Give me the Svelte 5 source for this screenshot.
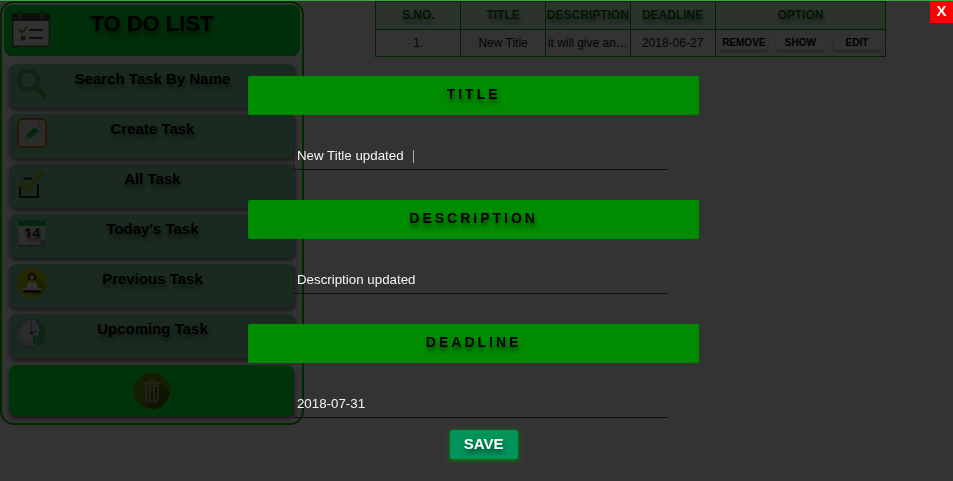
<script>
  const menu = [
    { icon: 'search', label: 'Search Task By Name' },
    { icon: 'create', label: 'Create Task' },
    { icon: 'all', label: 'All Task' },
    { icon: 'today', label: "Today's Task" },
    { icon: 'previous', label: 'Previous Task' },
    { icon: 'upcoming', label: 'Upcoming Task' }
  ];
  const columns = ['S.NO.', 'TITLE', 'DESCRIPTION', 'DEADLINE', 'OPTION'];
  const tasks = [
    { title: 'New Title', description: 'it will give an…', deadline: '2018-06-27' }
  ];
  const ticks = Array.from({ length: 12 }, (_, i) => i * 30);

  let title = $state('New Title updated');
  let description = $state('Description updated');
  let deadline = $state('2018-07-31');
</script>

<div class="page">
  <aside>
    <header>
      <svg class="logo" viewBox="0 0 38 36" aria-hidden="true">
        <rect x="0.700" y="2.700" width="36.600" height="32.600" rx="1" fill="#f4f4f4" stroke="#555" stroke-width="1.400" />
        <path d="M0 3h38v7H0z" fill="#404040" />
        <rect x="5" y="0" width="4.500" height="8.500" rx="2" fill="#3f8c1c" />
        <rect x="28" y="0" width="4.500" height="8.500" rx="2" fill="#3f8c1c" />
        <path d="M7 18l3 3.500 5.500-6" fill="none" stroke="#3f8c1c" stroke-width="1.800" />
        <circle cx="11" cy="27" r="2.600" fill="#3f8c1c" />
        <path d="M18 19h12M18 27h12" stroke="#404040" stroke-width="2" stroke-linecap="round" />
      </svg>
      <h1>TO DO LIST</h1>
    </header>

    <nav>
      {#each menu as item}
        <button class="item" type="button">
          <svg viewBox="0 0 30 30" aria-hidden="true">
            {#if item.icon === 'search'}
              <circle cx="11.500" cy="12" r="9.500" fill="none" stroke="#3cb450" stroke-width="4" />
              <path d="M18.500 19l9 8.500" stroke="#3cb450" stroke-width="4.500" stroke-linecap="round" />
            {:else if item.icon === 'create'}
              <rect x="1" y="1" width="28" height="28" rx="5" fill="#ddd" stroke="#d86b14" stroke-width="2" />
              <path d="M7.500 22.500l2-6 4 4z" fill="#d99a55" />
              <path d="M9.500 16.500l8.500-7.500 4.500 4-9 7.500z" fill="#12c35c" />
              <path d="M18 9l2-1.800 4 4.200-1.500 1.600z" fill="#eee" />
              <path d="M20 7.200q2-1.500 3.500 0t.5 4.200z" fill="#e58a8a" />
            {:else if item.icon === 'all'}
              <path d="M6.500 10.500h8.500M3 18v10q0 1.300 1.300 1.300h15.400q1.300 0 1.300-1.300V16" fill="none" stroke="#222" stroke-width="2" />
              <path d="M3 15l7 7L27 3.500" fill="none" stroke="#a3b43c" stroke-width="5.500" />
            {:else if item.icon === 'today'}
              <path d="M2 3h26v25H2z" fill="#e8e8e8" />
              <path d="M1.500 27h26.500v1.500H1.500z" fill="#777" />
              <path d="M1.500 2h27v6h-27z" fill="#18b84a" />
              <path d="M6 1v3M24 1v3" stroke="#ccc" stroke-width="1.500" />
              <text x="15" y="20" text-anchor="middle" font-size="15" font-weight="bold" font-family="Open Sans, sans-serif" fill="#333">14</text>
              <path d="M22 28q1-5 6-7v7z" fill="#999" />
            {:else if item.icon === 'previous'}
              <circle cx="15" cy="15" r="15" fill="#b4c400" />
              <path d="M18 7l11 10q-2 9-10 12l-11-6z" fill="#98a600" />
              <path d="M11 12V9q0-4 4-4t4 4v3z" fill="#333" />
              <circle cx="15" cy="9.500" r="2.400" fill="#edc3a0" />
              <path d="M9 21q0-8 6-8t6 8z" fill="#e8b8a0" />
              <path d="M10.500 15h9v5.500h-9z" fill="#fff" />
              <circle cx="15" cy="17.500" r="1" fill="#579bd2" />
              <path d="M5.500 20.500h19v1.500h-19z" fill="#fff" />
              <path d="M6.500 22h17v3h-17z" fill="#333" />
            {:else}
              <circle cx="14.500" cy="15" r="14" fill="#cbd4e6" stroke="#999fae" stroke-width="1.500" />
              {#each ticks as angle}
                <circle cx="14.500" cy="4" r="0.700" fill="#444" transform="rotate({angle} 14.500 15)" />
              {/each}
              <path d="M19 1.500q12 6 9 18l-2 4 2 3H16V16l4 3.500q5-6-1-18z" fill="#40b968" />
              <path d="M14.500 4v11" stroke="#d0803a" stroke-width="1.300" />
              <path d="M14.500 15l5-1.500" stroke="#c85a40" stroke-width="1" />
              <circle cx="14.500" cy="15" r="1.500" fill="#333" />
            {/if}
          </svg>
          <span>{item.label}</span>
        </button>
      {/each}
      <button class="trash" type="button" aria-label="Delete all tasks">
        <svg viewBox="0 0 36 36" aria-hidden="true">
          <circle cx="18" cy="18" r="18" fill="#6f8c00" />
          <path d="M26 10l9.500 9q-1 12-12 16.500q-5 1-8-.5L11 29z" fill="#4c6600" />
          <path d="M15 8h6M10 10h16" fill="none" stroke="#b4bb9c" stroke-width="1.600" />
          <path d="M11.800 12.500h12.400l-.7 16h-11zM16 13v15M20 13v15" fill="none" stroke="#b4bb9c" stroke-width="1.600" />
        </svg>
      </button>
    </nav>
  </aside>

  <main>
    <table>
      <thead>
        <tr>
          {#each columns as column}
            <th class:wide={column === 'OPTION'}>{column}</th>
          {/each}
        </tr>
      </thead>
      <tbody>
        {#each tasks as task, i}
          <tr>
            <td>{i + 1}.</td>
            <td>{task.title}</td>
            <td>{task.description}</td>
            <td>{task.deadline}</td>
            <td>
              <div class="options">
                <button type="button">REMOVE</button>
                <button type="button">SHOW</button>
                <button type="button">EDIT</button>
              </div>
            </td>
          </tr>
        {/each}
      </tbody>
    </table>
  </main>
</div>

<div class="overlay" role="dialog" aria-label="Edit task">
  <button class="close" type="button" aria-label="Close">X</button>
  <form>
    <label for="title">TITLE</label>
    <div class="field">
      <input id="title" type="text" bind:value={title} />
      <i class="caret"></i>
    </div>
    <label for="description">DESCRIPTION</label>
    <div class="field">
      <input id="description" type="text" bind:value={description} />
    </div>
    <label for="deadline">DEADLINE</label>
    <div class="field">
      <input id="deadline" type="text" bind:value={deadline} />
    </div>
    <button class="save" type="button">SAVE</button>
  </form>
</div>

<style>
  :global(body) {
    margin: 0;
    background: #fff;
    font-family: "Liberation Sans", Arial, sans-serif;
  }

  * {
    box-sizing: border-box;
  }

  button,
  input {
    font-family: inherit;
  }

  button {
    border: 0;
    padding: 0;
    cursor: pointer;
  }

  .page {
    display: flex;
    align-items: flex-start;
    padding-top: 1px;
  }

  aside {
    width: 31.9%;
    padding: 2px 2px 7px;
    border: 2px solid #00c000;
    border-radius: 14px;
  }

  header {
    display: grid;
    grid-template-columns: 38px 1fr 38px;
    height: 51px;
    padding: 6px 8px;
    border-radius: 8px;
    background: #00e132;
  }

  .logo {
    width: 38px;
    height: 36px;
  }

  h1 {
    margin: 0;
    font-size: 22px;
    line-height: 26px;
    text-align: center;
    text-shadow: 1px 4px 4px rgba(0, 0, 0, 0.5);
  }

  nav {
    display: flex;
    flex-direction: column;
    gap: 6px;
    padding: 8px 4px 0 5px;
  }

  .item {
    display: grid;
    grid-template-columns: 30px 1fr 30px;
    align-items: start;
    height: 44px;
    padding: 4px 8px;
    border-radius: 8px;
    background: #82d2a0;
    box-shadow: 0 3px 4px rgba(0, 0, 0, 0.5);
    color: #000;
    font-size: 15px;
    font-weight: bold;
    line-height: 22px;
    text-shadow: 1px 4px 4px rgba(0, 0, 0, 0.5);
  }

  .item svg {
    width: 30px;
    height: 30px;
  }

  .trash {
    display: flex;
    align-items: center;
    justify-content: center;
    height: 51px;
    margin: 1px 2px 0 0;
    border-radius: 7px;
    background: #00ff32;
    box-shadow: 0 3px 4px rgba(0, 0, 0, 0.5);
  }

  .trash svg {
    width: 36px;
    height: 36px;
  }

  main {
    flex: 1;
    padding: 0 7% 0 7.5%;
  }

  table {
    width: 100%;
    table-layout: fixed;
    border-collapse: collapse;
    font-size: 12px;
    line-height: 14px;
    text-align: center;
  }

  th,
  td {
    height: 27px;
    padding: 0;
    border: 1px solid #00b400;
    white-space: nowrap;
  }

  th {
    height: 28px;
    padding-bottom: 2px;
    background: #dcffe1;
    color: #007800;
    text-shadow: 1px 4px 4px rgba(0, 0, 0, 0.5);
  }

  th.wide {
    width: 33.5%;
  }

  td {
    color: #111;
  }

  .options {
    display: flex;
    justify-content: space-around;
  }

  .options button {
    width: 49px;
    height: 14px;
    border-radius: 3px;
    background: #fff;
    box-shadow: 0 2px 3px rgba(0, 0, 0, 0.3);
    color: #000;
    font-size: 10px;
    font-weight: bold;
    line-height: 12px;
  }

  .overlay {
    position: fixed;
    inset: 0;
    border-top: 1px solid #3fa648;
    background: rgba(0, 0, 0, 0.8);
    background-clip: padding-box;
  }

  .close {
    position: absolute;
    top: 0;
    right: 0;
    width: 23px;
    height: 22px;
    padding-bottom: 2px;
    background: #f00;
    color: #fff;
    font-size: 15px;
    font-weight: bold;
    line-height: 20px;
  }

  form {
    display: flex;
    flex-direction: column;
    width: 47.4%;
    margin-left: 26%;
    padding-top: 75px;
  }

  label {
    height: 39px;
    border-radius: 2px;
    background: #008c00;
    color: #000;
    font-size: 14px;
    font-weight: bold;
    letter-spacing: 3px;
    line-height: 37px;
    text-align: center;
    text-shadow: 1px 4px 4px rgba(0, 0, 0, 0.5);
  }

  .field {
    position: relative;
    width: 83%;
    margin: 30px 0 30px 10%;
  }

  .field:last-of-type {
    margin-bottom: 12px;
  }

  input {
    display: block;
    width: 100%;
    height: 25px;
    padding: 0 3px 3px;
    border: 0;
    border-bottom: 1px solid #111;
    border-left: 1px solid #1c1c1c;
    outline: 0;
    background: transparent;
    color: #f4f4f4;
  }

  .caret {
    position: absolute;
    top: 5px;
    left: 120px;
    width: 1px;
    height: 13px;
    background: #aaa;
  }

  .save {
    align-self: center;
    width: 68px;
    height: 29px;
    margin-left: 20px;
    padding-bottom: 2px;
    border-radius: 2px;
    background: #00935a;
    box-shadow: 0 1px 5px #008c00;
    color: #fff;
    font-size: 15px;
    font-weight: bold;
    text-shadow: 1px 4px 4px rgba(0, 0, 0, 0.5);
  }
</style>
